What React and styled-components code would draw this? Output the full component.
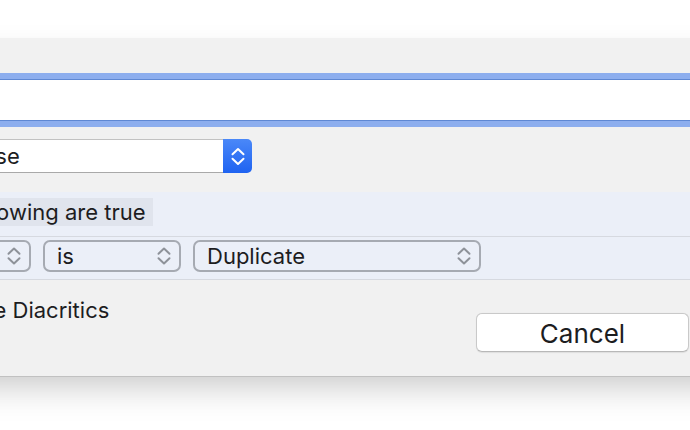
import React from 'react';
import styled, { createGlobalStyle } from 'styled-components';

const GlobalStyle = createGlobalStyle`
  html, body { margin: 0; padding: 0; background: #ffffff; overflow: hidden; }
  body { font-family: Inter, "Noto Sans", sans-serif; color: #1d1d1f; -webkit-font-smoothing: antialiased; }
  #root { width: 690px; height: 430px; overflow: hidden; }
`;

const Sheet = styled.div`
  margin: 38px 0 0 -300px;
  width: 1140px;
  height: 338px;
  background: #f1f1f1;
  box-shadow: 0 1px 0 rgba(0, 0, 0, 0.1), 0 16px 32px -6px rgba(0, 0, 0, 0.22);
  display: flex;
  flex-direction: column;
`;

const Form = styled.div`
  padding: 41px 20px 0;
  display: flex;
  flex-direction: column;
`;

const FormRow = styled.div`
  display: flex;
  align-items: center;
  gap: 10px;
  margin-top: ${(p) => p.$mt || 0}px;
`;

const RowLabel = styled.div`
  width: 120px;
  flex: none;
  text-align: right;
  font-size: 22px;
`;

const TextField = styled.div`
  flex: 1;
  height: 42px;
  box-sizing: border-box;
  background: #ffffff;
  border: 1px solid #5f88d3;
  box-shadow: 0 0 0 6px #8daeee;
`;

const Popup = styled.div`
  display: flex;
  width: ${(p) => p.$w}px;
  height: 34px;
  flex: none;
`;

const PopupValue = styled.div`
  flex: 1;
  box-sizing: border-box;
  background: #ffffff;
  border: 1px solid #c2c2c2;
  border-right: none;
  border-bottom-color: #a9a9a9;
  border-radius: 5px 0 0 5px;
  padding-left: ${(p) => p.$pad}px;
  font-size: 22px;
  line-height: 32px;
  white-space: nowrap;
  overflow: hidden;
`;

const Stepper = styled.div`
  width: 29px;
  flex: none;
  border-radius: 0 5px 5px 0;
  background: linear-gradient(#4a88f8, #1f63f1);
  display: flex;
  align-items: center;
  justify-content: center;
`;

const Section = styled.div`
  margin-top: 19px;
  background: #ebeff8;
  border-bottom: 1px solid #d6d9e0;
`;

const HeaderRow = styled.div`
  padding: 6px 0 10px ${(p) => p.$left}px;
  border-bottom: 1px solid #d6d9e0;
  display: flex;
`;

const MatchLabel = styled.div`
  height: 28px;
  line-height: 28px;
  padding: 0 7px;
  background: #e0e4ed;
  font-size: 22px;
  white-space: nowrap;
`;

const CriteriaRow = styled.div`
  padding: 3px 0 7px ${(p) => p.$left}px;
  display: flex;
  gap: 12px;
`;

const CriteriaPopup = styled.div`
  width: ${(p) => p.$w}px;
  height: 32px;
  box-sizing: border-box;
  flex: none;
  border: 2px solid #a6aab2;
  border-radius: 7px;
  padding: 0 8px 0 12px;
  display: flex;
  align-items: center;
  justify-content: space-between;
  font-size: 22px;
  line-height: 28px;
  white-space: nowrap;
`;

const Footer = styled.div`
  flex: 1;
  display: flex;
  justify-content: space-between;
  align-items: flex-start;
  padding: 16px 20px 0 ${(p) => p.$left}px;
`;

const CheckRow = styled.label`
  display: flex;
  align-items: center;
  gap: 8px;
  font-size: 22px;
  line-height: 28px;
`;

const CheckBox = styled.span`
  width: 18px;
  height: 18px;
  box-sizing: border-box;
  border: 1px solid #b4b4b4;
  border-radius: 4px;
  background: #ffffff;
`;

const Buttons = styled.div`
  margin-top: 17px;
  display: flex;
  gap: 12px;
`;

const Button = styled.button`
  width: ${(p) => p.$w}px;
  height: 39px;
  box-sizing: border-box;
  padding: 2px 0 0;
  border: 1px solid #c9c9c9;
  border-bottom-color: #b8b8b8;
  border-radius: 6px;
  background: ${(p) => (p.$primary ? 'linear-gradient(#5a9bf9, #1f6ff2)' : '#ffffff')};
  color: ${(p) => (p.$primary ? '#ffffff' : '#1d1d1f')};
  box-shadow: 0 0.5px 1px rgba(0, 0, 0, 0.08);
  font-family: Inter, "Noto Sans", sans-serif;
  font-size: 26px;
  line-height: 34px;
`;

const Chevrons = ({ color, w = 14, h = 18 }) => (
  <svg width={w} height={h} viewBox="0 0 14 18" fill="none" stroke={color} strokeWidth="2" strokeLinecap="round" strokeLinejoin="round">
    <path d="M1.5 6.8 L7 1.5 L12.5 6.8" />
    <path d="M1.5 11.2 L7 16.5 L12.5 11.2" />
  </svg>
);

export default function App() {
  return (
    <>
      <GlobalStyle />
      <Sheet>
        <Form>
          <FormRow>
            <RowLabel>Name:</RowLabel>
            <TextField />
          </FormRow>
          <FormRow $mt={18}>
            <RowLabel>Search in:</RowLabel>
            <Popup $w={402}>
              <PopupValue $pad={24}>Any Database</PopupValue>
              <Stepper>
                <Chevrons color="#ffffff" w={14} h={19} />
              </Stepper>
            </Popup>
          </FormRow>
        </Form>
        <Section>
          <HeaderRow $left={159}>
            <MatchLabel>All of the following are true</MatchLabel>
          </HeaderRow>
          <CriteriaRow $left={209}>
            <CriteriaPopup $w={122}>
              <span>Item</span>
              <Chevrons color="#8e9299" />
            </CriteriaPopup>
            <CriteriaPopup $w={138}>
              <span>is</span>
              <Chevrons color="#8e9299" />
            </CriteriaPopup>
            <CriteriaPopup $w={288}>
              <span>Duplicate</span>
              <Chevrons color="#8e9299" />
            </CriteriaPopup>
          </CriteriaRow>
        </Section>
        <Footer $left={214}>
          <CheckRow>
            <CheckBox />
            <span>Ignore Diacritics</span>
          </CheckRow>
          <Buttons>
            <Button $w={213}>Cancel</Button>
            <Button $w={119} $primary>OK</Button>
          </Buttons>
        </Footer>
      </Sheet>
    </>
  );
}
